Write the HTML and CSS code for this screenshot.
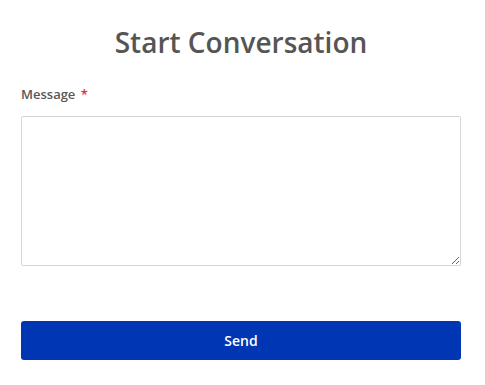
FILE: index.html
```html
<!DOCTYPE html>
<html lang="en">
  <head>
    <meta charset="UTF-8" />
    <title>Start Conversation</title>
    <link rel="stylesheet" href="styles.css">
  </head>
  <body>
    <div class="panel">
      <h1 class="title">Start Conversation</h1>
      <form class="form">
        <label class="label" for="message">Message <span class="req">*</span></label>
        <textarea id="message" class="message"></textarea>
        <button type="button" class="btn-send">Send</button>
      </form>
    </div>
  </body>
</html>
```
FILE: styles.css
```css
body {
  margin: 0;
  font-family: "Open Sans", Arial, sans-serif;
  background: #fff;
}

.panel {
  width: 440px;
  padding: 22px 21px 0;
}

.title {
  margin: 0;
  font-size: 28px;
  font-weight: 600;
  color: #555;
  text-align: center;
  line-height: 40px;
}

.form {
  display: flex;
  flex-direction: column;
  margin-top: 23px;
}

.label {
  font-size: 13px;
  font-weight: 600;
  color: #585858;
  line-height: 18px;
}

.req {
  color: #e0284a;
  margin-left: 2px;
}

.message {
  margin-top: 13px;
  height: 150px;
  box-sizing: border-box;
  border: 1px solid #d6d6d6;
  border-radius: 2px;
  resize: vertical;
  font-family: inherit;
}

.btn-send {
  margin-top: 55px;
  height: 39px;
  border: none;
  border-radius: 3px;
  background: #0036b3;
  color: #fff;
  font-family: inherit;
  font-size: 14px;
  font-weight: 600;
}
```
